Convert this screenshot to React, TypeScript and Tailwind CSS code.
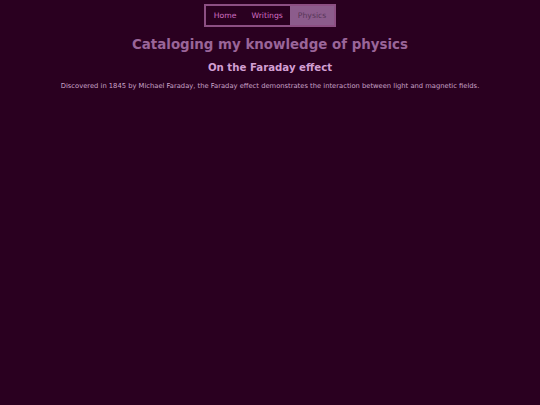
export default function App() {
  const links = ["Home", "Writings", "Physics"];
  const active = "Physics";

  return (
    <div className="min-h-screen bg-[#2a0020] font-['DejaVu_Sans',sans-serif]">
      <nav className="flex justify-center pt-1">
        <ul className="flex border-2 border-[#8c4f83]">
          {links.map((l) => (
            <li key={l}>
              <a
                href="#"
                className={
                  l === active
                    ? "block bg-[#8c5c8c] px-[7.5px] py-[4.5px] text-[7.7px] leading-[10px] text-[#573557]"
                    : "block px-[7.5px] py-[4.5px] text-[7.7px] leading-[10px] text-[#d16fc2]"
                }
              >
                {l}
              </a>
            </li>
          ))}
        </ul>
      </nav>

      <main className="text-center">
        <h1 className="mt-[10px] text-[13.4px] font-bold leading-[16px] text-[#9a6599]">
          Cataloging my knowledge of physics
        </h1>
        <h2 className="mt-[8px] text-[10.2px] font-bold leading-[13px] text-[#d29fd2]">
          On the Faraday effect
        </h2>
        <p className="mt-[8px] text-[6.75px] leading-[9px] text-[#c9a3c9]">
          Discovered in 1845 by Michael Faraday, the Faraday effect demonstrates the interaction between light and magnetic fields.
        </p>
      </main>
    </div>
  );
}
